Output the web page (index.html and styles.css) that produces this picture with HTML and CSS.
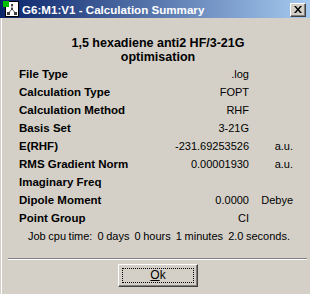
FILE: index.html
```html
<!DOCTYPE html>
<html>
<head>
<meta charset="utf-8">
<link rel="stylesheet" href="styles.css">
</head>
<body>
<div class="window">
  <div class="titlebar">
    <svg class="app-icon" width="16" height="16" viewBox="0 0 16 16">
      <rect x="2.5" y="0.5" width="13" height="15" fill="#fff" stroke="#000"/>
      <rect x="0" y="0" width="6" height="6" fill="#00c000"/>
      <line x1="9" y1="4" x2="9" y2="8" stroke="#606060" stroke-width="1"/>
      <line x1="9" y1="8" x2="5.5" y2="12" stroke="#606060" stroke-width="1"/>
      <line x1="9" y1="8" x2="12.5" y2="12" stroke="#606060" stroke-width="1"/>
      <rect x="8" y="3" width="2" height="2" fill="#404040"/>
      <rect x="8" y="7" width="2" height="2" fill="#404040"/>
      <rect x="4" y="11" width="3" height="3" fill="#404040"/>
      <rect x="11" y="11" width="3" height="3" fill="#404040"/>
    </svg>
    <span class="title">G6:M1:V1 - Calculation Summary</span>
    <div class="close-btn">
      <svg width="8" height="7" viewBox="0 0 8 7">
        <path d="M0 0h2l2 2.5L6 0h2L5 3.5 8 7H6L4 4.5 2 7H0l3-3.5z" fill="#000"/>
      </svg>
    </div>
  </div>
  <div class="content">
    <div class="heading">1,5 hexadiene anti2 HF/3-21G<br>optimisation</div>
    <div class="grid">
      <div class="label">File Type</div><div class="value">.log</div><div class="unit"></div>
      <div class="label">Calculation Type</div><div class="value">FOPT</div><div class="unit"></div>
      <div class="label">Calculation Method</div><div class="value">RHF</div><div class="unit"></div>
      <div class="label">Basis Set</div><div class="value">3-21G</div><div class="unit"></div>
      <div class="label">E(RHF)</div><div class="value">-231.69253526</div><div class="unit">a.u.</div>
      <div class="label">RMS Gradient Norm</div><div class="value">0.00001930</div><div class="unit">a.u.</div>
      <div class="label">Imaginary Freq</div><div class="value"></div><div class="unit"></div>
      <div class="label">Dipole Moment</div><div class="value">0.0000</div><div class="unit">Debye</div>
      <div class="label">Point Group</div><div class="value">CI</div><div class="unit"></div>
    </div>
    <div class="cpu">Job cpu time:&nbsp; 0 days&nbsp; 0 hours&nbsp; 1 minutes&nbsp; 2.0 seconds.</div>
    <div class="separator"></div>
    <div class="footer">
      <div class="ok-btn"><span class="focus"><u>O</u>k</span></div>
    </div>
  </div>
</div>
</body>
</html>
```
FILE: styles.css
```css
html, body {
  margin: 0;
  padding: 0;
  background: #d4d0c8;
}
.window {
  width: 310px;
  height: 294px;
  background: #d4d0c8;
  font-family: "Liberation Sans", Arial, sans-serif;
  font-size: 11px;
  color: #000;
  overflow: hidden;
  display: flex;
  flex-direction: column;
}
.titlebar {
  height: 18px;
  flex: none;
  background: linear-gradient(to right, #0a246a, #a6caf0);
  display: flex;
  align-items: center;
  padding-left: 3px;
  padding-right: 4px;
}
.app-icon {
  flex: none;
  display: block;
}
.title {
  margin-left: 3px;
  color: #fff;
  font-weight: bold;
  font-size: 11.6px;
  font-family: "Liberation Sans", Arial, sans-serif;
  flex: 1;
  white-space: nowrap;
}
.close-btn {
  width: 14px;
  height: 12px;
  background: #d4d0c8;
  border-top: 1px solid #fff;
  border-left: 1px solid #fff;
  border-right: 1px solid #404040;
  border-bottom: 1px solid #404040;
  box-shadow: inset -1px -1px 0 #808080;
  display: flex;
  align-items: center;
  justify-content: center;
  margin-top: 1px;
}
.close-btn svg {
  display: block;
}
.content {
  flex: 1;
  border-left: 1px solid #fff;
  margin-left: 1px;
  display: flex;
  flex-direction: column;
  padding-top: 18px;
}
.heading {
  font-weight: bold;
  text-align: center;
  line-height: 14px;
  font-size: 12.5px;
  padding-left: 4px;
}
.grid {
  display: grid;
  grid-template-columns: 130px 100px 44px;
  grid-auto-rows: 18px;
  margin-left: 17px;
  margin-top: 1px;
  align-items: center;
}
.label {
  font-weight: bold;
  font-size: 11.5px;
}
.value {
  text-align: right;
  font-size: 11px;
}
.unit {
  text-align: right;
  font-size: 11px;
}
.cpu {
  height: 18px;
  line-height: 18px;
  white-space: nowrap;
  margin-left: 26px;
  font-size: 11px;
  word-spacing: -0.5px;
}
.separator {
  margin: 13px 3px 0 6px;
  border-top: 1px solid #808080;
  border-bottom: 1px solid #fff;
  height: 0;
}
.footer {
  display: flex;
  justify-content: center;
  padding-top: 4px;
  padding-left: 4px;
}
.ok-btn {
  height: 21px;
  border-top: 1px solid #fff;
  border-left: 1px solid #fff;
  border-right: 1px solid #404040;
  border-bottom: 1px solid #404040;
  box-shadow: inset -1px -1px 0 #808080;
  display: flex;
  align-items: center;
  justify-content: center;
  padding: 0 3px;
  box-sizing: content-box;
  width: 72px;
}
.focus {
  flex: 1;
  height: 13px;
  line-height: 13px;
  border: 1px dotted #000;
  text-align: center;
  font-size: 12px;
}
```
